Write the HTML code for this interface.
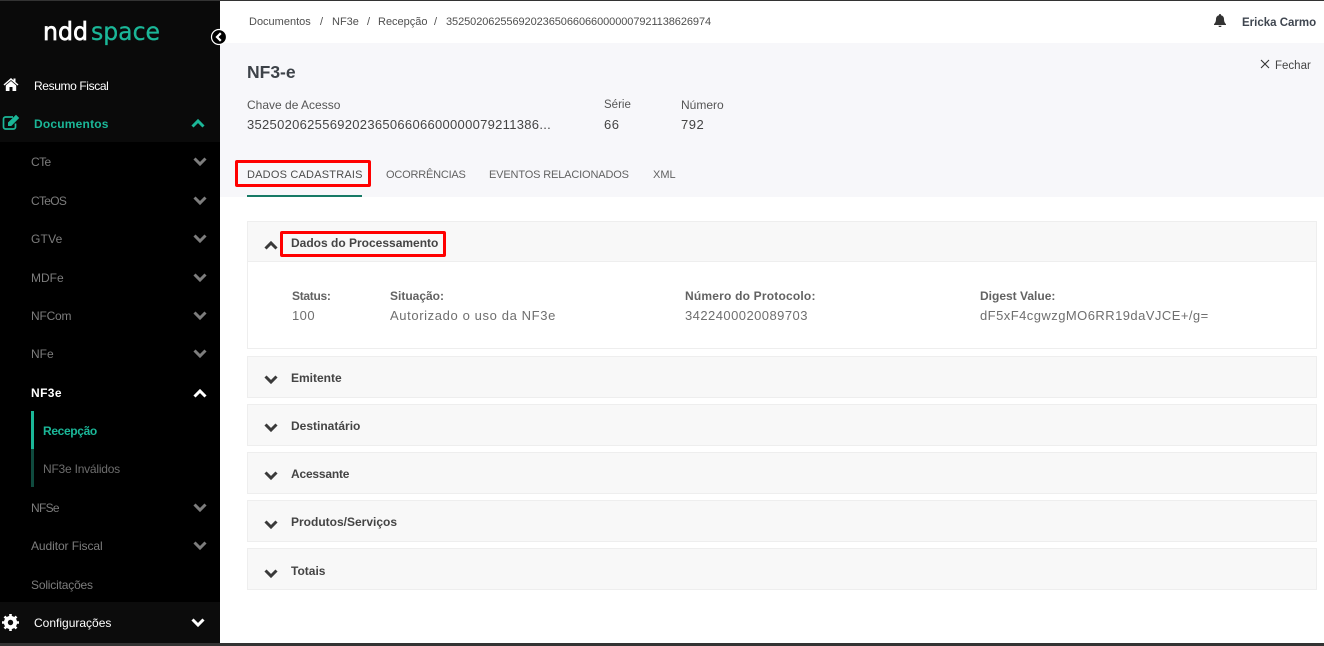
<!DOCTYPE html>
<html lang="pt-BR"><head><meta charset="utf-8"><title>NF3-e</title>
<style>
html,body{margin:0;padding:0;background:#fff}
#p{position:relative;width:1324px;height:646px;overflow:hidden;background:#fff;font-family:"Liberation Sans",Arial,sans-serif}
.a{position:absolute}
.t{position:absolute;white-space:nowrap;line-height:16px;font-size:12px}
.m{color:#7d7d7d;left:31px}
.l{color:#626262;font-weight:700;font-size:12px}
.v{color:#6f6f6f;font-size:13px;letter-spacing:.45px}
.h{color:#444;font-weight:700;font-size:12px;left:291px}
.box{position:absolute;left:247px;width:1068px;border:1px solid #eee;background:#f8f8f8}
.tab{color:#626262;font-size:11px;top:167px}
.b{color:#4f4f4f;font-size:11px;top:14px}
.c{position:absolute;fill:none;stroke-width:3;stroke-linecap:butt}
</style></head><body><div id="p">
<div class="a" style="left:0;top:0;width:220px;height:646px;background:#000"></div>
<div class="a" style="left:0;top:0;width:220px;height:142px;background:#0a0a0a"></div>
<div class="a" style="left:0;top:602px;width:220px;height:41px;background:#0c0c0c"></div>
<div class="a" style="left:220px;top:43px;width:1104px;height:154px;background:#f7f7fa"></div>
<div class="a" style="left:0;top:0;width:1324px;height:1px;background:#333"></div>
<div class="a" style="left:0;top:643px;width:1324px;height:3px;background:#333"></div>

<svg class="a" style="left:40px;top:15px" width="130" height="36"><text x="3" y="25" font-family="DejaVu Sans,sans-serif" font-size="25" fill="#fff" stroke="#fff" stroke-width=".7" textLength="45" lengthAdjust="spacingAndGlyphs">ndd</text><text x="51" y="25" font-family="DejaVu Sans,sans-serif" font-size="25" fill="#1bb798" stroke="#1bb798" stroke-width=".3" textLength="69" lengthAdjust="spacingAndGlyphs">space</text></svg>
<svg class="a" style="left:210px;top:28px" width="18" height="18"><circle cx="9" cy="9" r="7.5" fill="#000" stroke="#fff" stroke-width="1.2"/><path d="M10.8 5.2 7 9l3.8 3.8" fill="none" stroke="#fff" stroke-width="2.2"/></svg>

<svg class="a" style="left:3px;top:77px" width="16" height="14" viewBox="0 0 16 14"><path d="M8 1 .5 7.5l1 1L8 3l6.500 5.500 1-1L12.500 5V1.500h-2V3.300z" fill="#fff"/><path d="M8 4 2.800 8.400V14H6.500V10h3v4h3.700V8.400z" fill="#fff"/></svg>
<div class="t" style="left:34px;top:78px;color:#fff;letter-spacing:-.38px">Resumo Fiscal</div>
<svg class="a" style="left:2px;top:114px" width="18" height="16" viewBox="0 0 18 16"><path d="M11 3H3.500A2 2 0 0 0 1.500 5v8a2 2 0 0 0 2 2h8a2 2 0 0 0 2-2V9.500" fill="none" stroke="#1bb798" stroke-width="1.700"/><path d="M6 8.500 14 .8 17.200 4 9.300 12H6z" fill="#1bb798"/></svg>
<div class="t" style="left:34px;top:116px;color:#1bb798;font-weight:700;letter-spacing:.2px">Documentos</div>
<svg class="c" style="left:191px;top:118px;stroke:#1bb798" width="14" height="10"><path d="M1.500 8.500 7 3l5.500 5.500"/></svg>

<div class="t m" style="top:154px;letter-spacing:-.6px">CTe</div>
<div class="t m" style="top:193px;letter-spacing:-.7px">CTeOS</div>
<div class="t m" style="top:231px;letter-spacing:.2px">GTVe</div>
<div class="t m" style="top:270px">MDFe</div>
<div class="t m" style="top:308px;letter-spacing:-.2px">NFCom</div>
<div class="t m" style="top:346px">NFe</div>
<div class="t" style="left:31px;top:385px;color:#fff;font-weight:700;letter-spacing:.4px">NF3e</div>
<div class="t" style="left:43px;top:423px;color:#1bb798;font-weight:700;letter-spacing:-.35px">Recepção</div>
<div class="t" style="left:43px;top:461px;color:#6d6d6d;letter-spacing:-.22px">NF3e Inválidos</div>
<div class="t m" style="top:500px;letter-spacing:-.7px">NFSe</div>
<div class="t m" style="top:538px;letter-spacing:-.08px">Auditor Fiscal</div>
<div class="t m" style="top:577px;letter-spacing:-.18px">Solicitações</div>
<div class="a" style="left:31px;top:411px;width:3px;height:38px;background:#1bb798"></div>
<div class="a" style="left:31px;top:449px;width:3px;height:38px;background:#0f4a3e"></div>

<svg class="c" style="left:193px;top:157px;stroke:#7d7d7d" width="14" height="10"><path d="M1.500 1.500 7 7l5.500-5.500"/></svg>
<svg class="c" style="left:193px;top:196px;stroke:#7d7d7d" width="14" height="10"><path d="M1.500 1.500 7 7l5.500-5.500"/></svg>
<svg class="c" style="left:193px;top:234px;stroke:#7d7d7d" width="14" height="10"><path d="M1.500 1.500 7 7l5.500-5.500"/></svg>
<svg class="c" style="left:193px;top:273px;stroke:#7d7d7d" width="14" height="10"><path d="M1.500 1.500 7 7l5.500-5.500"/></svg>
<svg class="c" style="left:193px;top:311px;stroke:#7d7d7d" width="14" height="10"><path d="M1.500 1.500 7 7l5.500-5.500"/></svg>
<svg class="c" style="left:193px;top:349px;stroke:#7d7d7d" width="14" height="10"><path d="M1.500 1.500 7 7l5.500-5.500"/></svg>
<svg class="c" style="left:193px;top:388px;stroke:#fff" width="14" height="10"><path d="M1.500 8.500 7 3l5.500 5.500"/></svg>
<svg class="c" style="left:193px;top:503px;stroke:#7d7d7d" width="14" height="10"><path d="M1.500 1.500 7 7l5.500-5.500"/></svg>
<svg class="c" style="left:193px;top:541px;stroke:#7d7d7d" width="14" height="10"><path d="M1.500 1.500 7 7l5.500-5.500"/></svg>
<svg class="a" style="left:2px;top:614px" width="17" height="17" viewBox="0 0 17 17"><circle cx="8.500" cy="8.500" r="4.800" fill="none" stroke="#fff" stroke-width="3.600"/><path d="M8.500 0v17M0 8.500h17M2.500 2.500l12 12M14.500 2.500l-12 12" stroke="#fff" stroke-width="2.600"/><circle cx="8.500" cy="8.500" r="2.700" fill="#0c0c0c"/></svg>
<div class="t" style="left:34px;top:615px;color:#fff">Configurações</div>
<svg class="c" style="left:191px;top:618px;stroke:#fff" width="14" height="10"><path d="M1.500 1.500 7 7l5.500-5.500"/></svg>

<div class="t b" style="left:249px">Documentos</div>
<div class="t b" style="left:320px">/</div>
<div class="t b" style="left:332px">NF3e</div>
<div class="t b" style="left:367px">/</div>
<div class="t b" style="left:378px">Recepção</div>
<div class="t b" style="left:434px">/</div>
<div class="t b" style="left:446px;letter-spacing:-.075px">35250206255692023650660660000007921138626974</div>
<svg class="a" style="left:1214px;top:14px" width="12" height="13" viewBox="0 0 12 13"><path d="M6 0a1 1 0 0 0-1 1.200C3 1.700 2 3.200 2 5c0 3-1 4-2 5.200V11h12v-.8C11 9 10 8 10 5c0-1.800-1-3.300-3-3.800A1 1 0 0 0 6 0zM4.500 11.700a1.500 1.300 0 0 0 3 0z" fill="#333"/></svg>
<div class="t" style="left:1242px;top:15px;color:#3f4650;font-size:11.500px;font-weight:700">Ericka Carmo</div>

<svg class="a" style="left:1260px;top:59px" width="10" height="10"><path d="M1 1l8 8M9 1l-8 8" stroke="#333" stroke-width="1.100"/></svg>
<div class="t" style="left:1275px;top:58px;color:#444;font-size:11.500px">Fechar</div>

<div class="t" style="left:247px;top:63px;color:#3d4248;font-size:17.500px;line-height:18px;font-weight:700">NF3-e</div>
<div class="t" style="left:247px;top:97px;color:#555;font-size:12px">Chave de Acesso</div>
<div class="t" style="left:247px;top:117px;color:#444;font-size:13px;letter-spacing:.29px">352502062556920236506606600000079211386...</div>
<div class="t" style="left:604px;top:97px;color:#555;font-size:11.500px">Série</div>
<div class="t" style="left:604px;top:117px;color:#444;font-size:13px;letter-spacing:.5px">66</div>
<div class="t" style="left:681px;top:97px;color:#555;font-size:12px">Número</div>
<div class="t" style="left:681px;top:117px;color:#444;font-size:13px;letter-spacing:.5px">792</div>

<div class="t tab" style="left:247px;color:#4c4c4c;letter-spacing:.2px">DADOS CADASTRAIS</div>
<div class="t tab" style="left:386px;letter-spacing:-.2px">OCORRÊNCIAS</div>
<div class="t tab" style="left:489px;letter-spacing:-.15px">EVENTOS RELACIONADOS</div>
<div class="t tab" style="left:653px">XML</div>
<div class="a" style="left:247px;top:195px;width:115px;height:2px;background:#177a66"></div>
<div class="a" style="left:235px;top:160px;width:130px;height:21px;border:3px solid #f00;border-radius:2px"></div>

<div class="box" style="top:221px;height:126px;background:#fff"></div>
<div class="box" style="top:221px;height:39px"></div>
<div class="box" style="top:356px;height:40px"></div>
<div class="box" style="top:404px;height:40px"></div>
<div class="box" style="top:452px;height:40px"></div>
<div class="box" style="top:500px;height:40px"></div>
<div class="box" style="top:548px;height:40px"></div>

<svg class="c" style="left:264px;top:240px;stroke:#3a3a3a" width="14" height="10"><path d="M1.500 8.500 7 3l5.500 5.500"/></svg>
<svg class="c" style="left:264px;top:375px;stroke:#3a3a3a" width="14" height="10"><path d="M1.500 1.500 7 7l5.500-5.500"/></svg>
<svg class="c" style="left:264px;top:423px;stroke:#3a3a3a" width="14" height="10"><path d="M1.500 1.500 7 7l5.500-5.500"/></svg>
<svg class="c" style="left:264px;top:471px;stroke:#3a3a3a" width="14" height="10"><path d="M1.500 1.500 7 7l5.500-5.500"/></svg>
<svg class="c" style="left:264px;top:520px;stroke:#3a3a3a" width="14" height="10"><path d="M1.500 1.500 7 7l5.500-5.500"/></svg>
<svg class="c" style="left:264px;top:569px;stroke:#3a3a3a" width="14" height="10"><path d="M1.500 1.500 7 7l5.500-5.500"/></svg>

<div class="t h" style="top:235px">Dados do Processamento</div>
<div class="t h" style="top:370px">Emitente</div>
<div class="t h" style="top:418px">Destinatário</div>
<div class="t h" style="top:466px;letter-spacing:-.2px">Acessante</div>
<div class="t h" style="top:514px">Produtos/Serviços</div>
<div class="t h" style="top:563px">Totais</div>
<div class="a" style="left:280px;top:231px;width:160px;height:20px;border:3px solid #f00;border-radius:2px"></div>

<div class="t l" style="left:292px;top:288px;letter-spacing:-.3px">Status:</div>
<div class="t v" style="left:292px;top:308px">100</div>
<div class="t l" style="left:390px;top:288px">Situação:</div>
<div class="t v" style="left:390px;top:308px;letter-spacing:.62px">Autorizado o uso da NF3e</div>
<div class="t l" style="left:685px;top:288px;letter-spacing:.2px">Número do Protocolo:</div>
<div class="t v" style="left:685px;top:308px">3422400020089703</div>
<div class="t l" style="left:980px;top:288px">Digest Value:</div>
<div class="t v" style="left:980px;top:308px">dF5xF4cgwzgMO6RR19daVJCE+/g=</div>
</div></body></html>
